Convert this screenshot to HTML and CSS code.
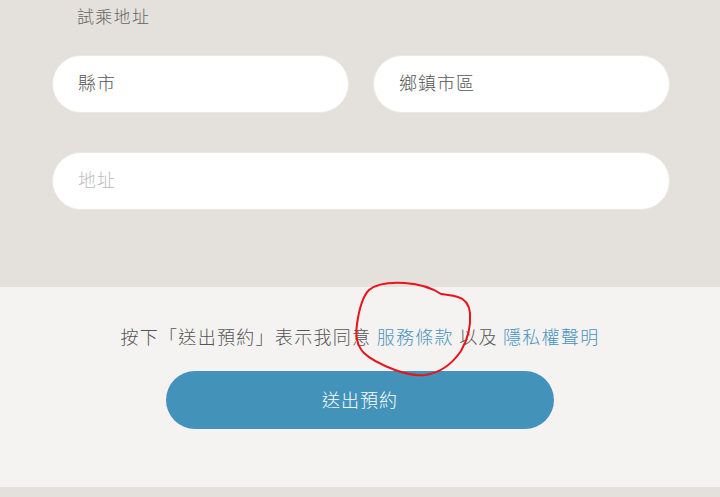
FILE: index.html
```html
<!DOCTYPE html>
<html lang="zh-Hant">
<head>
    <meta charset="UTF-8">
    <meta name="viewport" content="width=device-width, initial-scale=1.0">
    <title>試乘預約</title>
    <link rel="stylesheet" href="styles.css">
</head>
<body>
    <div class="address-section">
        <div class="field-label">試乘地址</div>

        <div class="address-row">
            <input type="text" class="pill-input" value="縣市">
            <input type="text" class="pill-input" value="鄉鎮市區">
        </div>

        <input type="text" class="pill-input address-input" placeholder="地址">
    </div>

    <div class="agree-section">
        <p class="agree-text">按下「送出預約」表示我同意 <a href="#">服務條款</a> 以及 <a href="#">隱私權聲明</a></p>
        <button class="submit-btn">送出預約</button>
    </div>

    <!-- hand-drawn mark over the terms link -->
    <svg class="scribble" width="720" height="497" viewBox="0 0 720 497">
        <path d="M441 294 C432 288 420 284 405 283 C390 282 376 284 369 290 C362 297 359 310 357 324 C355 338 358 347 364 353 C371 360 382 365 395 370 C406 374 415 376 425 375 C440 373 452 364 461 351 C468 339 471 326 470 313 C469 304 465 299 458 297 C452 295 447 295 441 294"
              fill="none" stroke="#e8141a" stroke-width="2" stroke-linecap="round" stroke-linejoin="round"/>
    </svg>
</body>
</html>
```

FILE: styles.css
```css
body {
    margin: 0;
    padding: 0;
    background: #e4e0db;
    font-family: "Noto Sans CJK TC", "Noto Sans", sans-serif;
    font-weight: 300;
    color: #555;
    position: relative;
}

.address-section {
    padding: 5px 50px 77px 52px;
}

.field-label {
    font-size: 17px;
    line-height: 22px;
    padding-left: 25px;
    color: #666;
    letter-spacing: 1.3px;
}

.address-row {
    display: grid;
    grid-template-columns: 1fr 1fr;
    gap: 24px;
    margin-top: 28px;
}

.pill-input {
    display: block;
    box-sizing: border-box;
    width: 100%;
    height: 58px;
    padding: 0 25px 4px;
    border: 1px solid #ece9e5;
    border-radius: 29px;
    background: #fff;
    font-family: inherit;
    font-weight: 300;
    font-size: 18px;
    letter-spacing: 1px;
    color: #555;
    outline: none;
}

.pill-input::placeholder {
    color: #bbb;
}

.address-input {
    margin-top: 39px;
}

.agree-section {
    background: #f4f3f1;
    padding: 36px 0 58px;
    display: flex;
    flex-direction: column;
    align-items: center;
    margin-bottom: 9px;
}

.agree-text {
    margin: 0;
    font-size: 18px;
    line-height: 26px;
    letter-spacing: 1.3px;
    color: #555;
}

.agree-text a {
    color: #4a93bf;
    text-decoration: none;
}

.submit-btn {
    margin-top: 22px;
    width: 388px;
    height: 58px;
    padding-bottom: 4px;
    border: none;
    border-radius: 29px;
    background: #4292ba;
    color: #fff;
    font-family: inherit;
    font-weight: 300;
    font-size: 18px;
    letter-spacing: 1px;
    cursor: pointer;
}

.scribble {
    position: absolute;
    top: 0;
    left: 0;
    pointer-events: none;
}
```
